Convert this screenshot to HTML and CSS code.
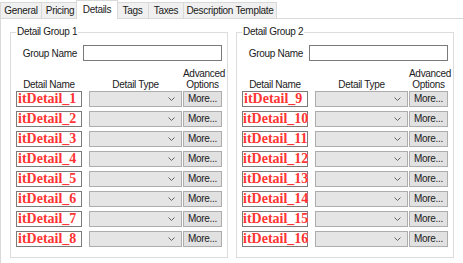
FILE: index.html
```html
<!DOCTYPE html>
<html lang="en">
<head>
  <meta charset="UTF-8">
  <title>Item Details</title>
  <link rel="stylesheet" href="styles.css">
</head>
<body>

  <!-- Tab strip -->
  <div class="tabs">
    <div class="tab tab-general">General</div>
    <div class="tab tab-pricing">Pricing</div>
    <div class="tab tab-details active">Details</div>
    <div class="tab tab-tags">Tags</div>
    <div class="tab tab-taxes">Taxes</div>
    <div class="tab tab-template">Description Template</div>
  </div>

  <div class="panel">

    <!-- Group 1 -->
    <fieldset class="group">
      <legend>Detail Group 1</legend>
      <div class="name-row">
        <label>Group Name</label>
        <div class="input"></div>
      </div>
      <div class="grid">
        <div class="head name-head">Detail Name</div>
        <div class="head type-head">Detail Type</div>
        <div class="head">Advanced<br>Options</div>

        <div class="textbox">itDetail_1</div>
        <div class="combo"><svg width="7" height="4" viewBox="0 0 7 4"><polyline points="0.5,0.5 3.5,3.5 6.5,0.5" fill="none" stroke="#606060"/></svg></div>
        <div class="btn">More...</div>

        <div class="textbox">itDetail_2</div>
        <div class="combo"><svg width="7" height="4" viewBox="0 0 7 4"><polyline points="0.5,0.5 3.5,3.5 6.5,0.5" fill="none" stroke="#606060"/></svg></div>
        <div class="btn">More...</div>

        <div class="textbox">itDetail_3</div>
        <div class="combo"><svg width="7" height="4" viewBox="0 0 7 4"><polyline points="0.5,0.5 3.5,3.5 6.5,0.5" fill="none" stroke="#606060"/></svg></div>
        <div class="btn">More...</div>

        <div class="textbox">itDetail_4</div>
        <div class="combo"><svg width="7" height="4" viewBox="0 0 7 4"><polyline points="0.5,0.5 3.5,3.5 6.5,0.5" fill="none" stroke="#606060"/></svg></div>
        <div class="btn">More...</div>

        <div class="textbox">itDetail_5</div>
        <div class="combo"><svg width="7" height="4" viewBox="0 0 7 4"><polyline points="0.5,0.5 3.5,3.5 6.5,0.5" fill="none" stroke="#606060"/></svg></div>
        <div class="btn">More...</div>

        <div class="textbox">itDetail_6</div>
        <div class="combo"><svg width="7" height="4" viewBox="0 0 7 4"><polyline points="0.5,0.5 3.5,3.5 6.5,0.5" fill="none" stroke="#606060"/></svg></div>
        <div class="btn">More...</div>

        <div class="textbox">itDetail_7</div>
        <div class="combo"><svg width="7" height="4" viewBox="0 0 7 4"><polyline points="0.5,0.5 3.5,3.5 6.5,0.5" fill="none" stroke="#606060"/></svg></div>
        <div class="btn">More...</div>

        <div class="textbox">itDetail_8</div>
        <div class="combo"><svg width="7" height="4" viewBox="0 0 7 4"><polyline points="0.5,0.5 3.5,3.5 6.5,0.5" fill="none" stroke="#606060"/></svg></div>
        <div class="btn">More...</div>
      </div>
    </fieldset>

    <!-- Group 2 -->
    <fieldset class="group">
      <legend>Detail Group 2</legend>
      <div class="name-row">
        <label>Group Name</label>
        <div class="input"></div>
      </div>
      <div class="grid">
        <div class="head name-head">Detail Name</div>
        <div class="head type-head">Detail Type</div>
        <div class="head">Advanced<br>Options</div>

        <div class="textbox">itDetail_9</div>
        <div class="combo"><svg width="7" height="4" viewBox="0 0 7 4"><polyline points="0.5,0.5 3.5,3.5 6.5,0.5" fill="none" stroke="#606060"/></svg></div>
        <div class="btn">More...</div>

        <div class="textbox wide">itDetail_10</div>
        <div class="combo"><svg width="7" height="4" viewBox="0 0 7 4"><polyline points="0.5,0.5 3.5,3.5 6.5,0.5" fill="none" stroke="#606060"/></svg></div>
        <div class="btn">More...</div>

        <div class="textbox wide">itDetail_11</div>
        <div class="combo"><svg width="7" height="4" viewBox="0 0 7 4"><polyline points="0.5,0.5 3.5,3.5 6.5,0.5" fill="none" stroke="#606060"/></svg></div>
        <div class="btn">More...</div>

        <div class="textbox wide">itDetail_12</div>
        <div class="combo"><svg width="7" height="4" viewBox="0 0 7 4"><polyline points="0.5,0.5 3.5,3.5 6.5,0.5" fill="none" stroke="#606060"/></svg></div>
        <div class="btn">More...</div>

        <div class="textbox wide">itDetail_13</div>
        <div class="combo"><svg width="7" height="4" viewBox="0 0 7 4"><polyline points="0.5,0.5 3.5,3.5 6.5,0.5" fill="none" stroke="#606060"/></svg></div>
        <div class="btn">More...</div>

        <div class="textbox wide">itDetail_14</div>
        <div class="combo"><svg width="7" height="4" viewBox="0 0 7 4"><polyline points="0.5,0.5 3.5,3.5 6.5,0.5" fill="none" stroke="#606060"/></svg></div>
        <div class="btn">More...</div>

        <div class="textbox wide">itDetail_15</div>
        <div class="combo"><svg width="7" height="4" viewBox="0 0 7 4"><polyline points="0.5,0.5 3.5,3.5 6.5,0.5" fill="none" stroke="#606060"/></svg></div>
        <div class="btn">More...</div>

        <div class="textbox wide">itDetail_16</div>
        <div class="combo"><svg width="7" height="4" viewBox="0 0 7 4"><polyline points="0.5,0.5 3.5,3.5 6.5,0.5" fill="none" stroke="#606060"/></svg></div>
        <div class="btn">More...</div>
      </div>
    </fieldset>

  </div>

</body>
</html>
```

FILE: styles.css
```css
body {
  margin: 0;
  font-family: "Liberation Sans", Arial, sans-serif;
  font-size: 10px;
  letter-spacing: -0.3px;
  color: #1a1a1a;
  background-color: #fff;
  overflow: hidden;
}
.tabs {
  display: flex;
  align-items: flex-end;
  height: 18px;
}
.tab {
  height: 16px;
  line-height: 15px;
  text-align: center;
  background-color: #f0f0f0;
  border: 1px solid #d9d9d9;
  border-bottom: none;
  margin-right: -1px;
  box-sizing: border-box;
}
.tab-general { width: 42px; }
.tab-pricing { width: 38px; }
.tab-details { width: 42px; }
.tab-tags { width: 33px; }
.tab-taxes { width: 36px; }
.tab-template { width: 94px; }
.tab.active {
  position: relative;
  z-index: 1;
  height: 19px;
  line-height: 17px;
  margin: 0 -2px -1px -2px;
  background-color: #fff;
}
.panel {
  display: flex;
  gap: 8px;
  height: 245px;
  box-sizing: border-box;
  padding: 7px 8px 0 9px;
  border-top: 1px solid #d9d9d9;
  border-left: 1px solid #d9d9d9;
}
.group {
  margin: 0;
  padding: 7px 5px;
  width: 218px;
  height: 232px;
  box-sizing: border-box;
  border: 1px solid #dcdcdc;
  min-inline-size: 0;
}
.group legend {
  padding: 0 1px;
  line-height: 12px;
}
.name-row {
  display: grid;
  grid-template-columns: 67px 139px;
  align-items: center;
}
.name-row label {
  text-align: right;
  padding-right: 6px;
}
.input {
  height: 16px;
  box-sizing: border-box;
  border: 1px solid #7a7a7a;
  background-color: #fff;
}
.grid {
  display: grid;
  grid-template-columns: 73px 94px 39px;
  grid-template-rows: 22px;
  grid-auto-rows: 16px;
  row-gap: 4px;
  margin-top: 4px;
}
.head {
  align-self: end;
  line-height: 11px;
  text-align: center;
  margin-bottom: -3px;
}
.name-head {
  width: 66px;
}
.type-head {
  width: 93px;
}
.textbox {
  width: 66px;
  height: 16px;
  box-sizing: border-box;
  border: 1px solid #7a7a7a;
  background-color: #fff;
  padding-left: 1px;
  font-family: "Liberation Serif", "Times New Roman", serif;
  font-weight: bold;
  font-size: 14px;
  letter-spacing: 0;
  line-height: 14px;
  color: #f33;
  white-space: nowrap;
}
.textbox.wide {
  padding-left: 0;
}
.combo {
  width: 93px;
  height: 16px;
  box-sizing: border-box;
  border: 1px solid #adadad;
  background-color: #e5e5e5;
  display: flex;
  align-items: center;
  justify-content: flex-end;
  padding-right: 6px;
}
.btn {
  height: 16px;
  box-sizing: border-box;
  border: 1px solid #adadad;
  background-color: #e1e1e1;
  text-align: center;
  line-height: 14px;
}
```
